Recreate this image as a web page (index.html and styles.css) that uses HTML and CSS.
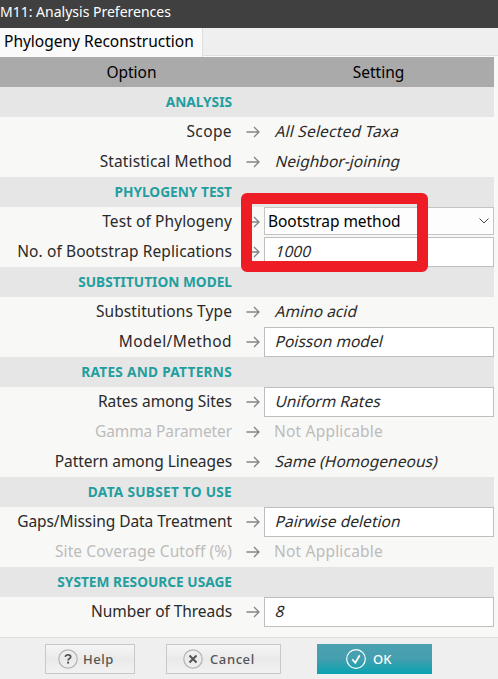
FILE: index.html
```html
<!DOCTYPE html>
<html lang="en">
<head>
<meta charset="utf-8">
<title>M11: Analysis Preferences</title>
<link rel="stylesheet" href="styles.css">
</head>
<body>
<svg width="0" height="0" class="defs"><defs><symbol id="arrow" viewBox="0 0 14 12"><path d="M0.5 6H13M8 1L13 6L8 11" fill="none" stroke="#858585" stroke-width="1.3"/></symbol></defs></svg>
<div class="window">
  <header class="titlebar"><span>M11: Analysis Preferences</span></header>
  <nav class="tabs"><div class="tab"><span>Phylogeny Reconstruction</span></div></nav>
  <main class="panel">
    <div class="grid">
      <div class="row head"><div class="col-option"><span>Option</span></div><div class="col-setting"><span>Setting</span></div></div>
      <div class="row section"><span>ANALYSIS</span></div>
      <div class="row"><span class="label wide">Scope</span><svg class="arrow"><use href="#arrow"/></svg><div class="value airy"><span>All Selected Taxa</span></div></div>
      <div class="row"><span class="label loose">Statistical Method</span><svg class="arrow"><use href="#arrow"/></svg><div class="value"><span>Neighbor-joining</span></div></div>
      <div class="row section"><span>PHYLOGENY TEST</span></div>
      <div class="row"><span class="label loose">Test of Phylogeny</span><svg class="arrow"><use href="#arrow"/></svg><div class="value select"><span>Bootstrap method</span><svg class="chevron" viewBox="0 0 10 6"><path d="M0.5 0.5L5 5L9.5 0.5" fill="none" stroke="#444" stroke-width="1"/></svg></div></div>
      <div class="row"><span class="label loose">No. of Bootstrap Replications</span><svg class="arrow"><use href="#arrow"/></svg><div class="value field"><span>1000</span></div><div class="highlight"></div></div>
      <div class="row section"><span>SUBSTITUTION MODEL</span></div>
      <div class="row"><span class="label loose">Substitutions Type</span><svg class="arrow"><use href="#arrow"/></svg><div class="value"><span>Amino acid</span></div></div>
      <div class="row"><span class="label wide">Model/Method</span><svg class="arrow"><use href="#arrow"/></svg><div class="value field"><span>Poisson model</span></div></div>
      <div class="row section spaced"><span>RATES AND PATTERNS</span></div>
      <div class="row"><span class="label">Rates among Sites</span><svg class="arrow"><use href="#arrow"/></svg><div class="value field"><span>Uniform Rates</span></div></div>
      <div class="row disabled"><span class="label tight">Gamma Parameter</span><svg class="arrow"><use href="#arrow"/></svg><div class="value"><span>Not Applicable</span></div></div>
      <div class="row"><span class="label snug">Pattern among Lineages</span><svg class="arrow"><use href="#arrow"/></svg><div class="value"><span>Same (Homogeneous)</span></div></div>
      <div class="row section spaced"><span>DATA SUBSET TO USE</span></div>
      <div class="row"><span class="label snug">Gaps/Missing Data Treatment</span><svg class="arrow"><use href="#arrow"/></svg><div class="value field"><span>Pairwise deletion</span></div></div>
      <div class="row disabled"><span class="label loose">Site Coverage Cutoff (%)</span><svg class="arrow"><use href="#arrow"/></svg><div class="value"><span>Not Applicable</span></div></div>
      <div class="row section"><span>SYSTEM RESOURCE USAGE</span></div>
      <div class="row"><span class="label snug">Number of Threads</span><svg class="arrow"><use href="#arrow"/></svg><div class="value field"><span>8</span></div></div>
    </div>
  </main>
  <footer class="footer">
    <button class="btn help"><svg viewBox="0 0 20 20"><circle cx="10" cy="10" r="9.2" fill="none" stroke="#b4b4b4" stroke-width="1.2"/><path d="M7.3 7.8C7.6 6.3 8.8 5.9 10 5.9C11.6 5.9 12.7 6.6 12.7 7.9C12.7 9.5 10.1 9.5 10.1 11.5" fill="none" stroke="#555" stroke-width="1.7"/><circle cx="10.1" cy="13.7" r="1.1" fill="#555"/></svg><span>Help</span></button>
    <button class="btn cancel"><svg viewBox="0 0 20 20"><circle cx="10" cy="10" r="9.2" fill="none" stroke="#b4b4b4" stroke-width="1.2"/><path d="M6.5 6.5L13.5 13.5M13.5 6.5L6.5 13.5" fill="none" stroke="#555" stroke-width="2"/></svg><span>Cancel</span></button>
    <button class="btn ok"><svg viewBox="0 0 20 20"><circle cx="10" cy="10" r="9.3" fill="none" stroke="#fff" stroke-width="1.2"/><path d="M6.3 10.3L9.3 13.8L13.7 6.2" fill="none" stroke="#fff" stroke-width="1.7"/></svg><span>OK</span></button>
  </footer>
</div>
</body>
</html>
```
FILE: styles.css
```css
* { box-sizing: border-box; }
body { margin: 0; font-family: "Noto Sans", "Open Sans", sans-serif; font-size: 15.5px; color: #2a2a2a; overflow: hidden; }
.defs { display: block; }
.window { width: 498px; height: 679px; display: flex; flex-direction: column; background: #f0f0f0; }
.titlebar { height: 28px; line-height: 24px; background: #404040; color: #fff; font-size: 14px; white-space: nowrap; }
.tabs { height: 29px; display: flex; background: linear-gradient(#efefef 27px, #e0e0e0 27px, #e0e0e0 28px, #fafafa 28px); }
.tab { width: 203px; height: 29px; padding-left: 4px; line-height: 27px; background: #fafafa; border-right: 1px solid #dedede; color: #000; white-space: nowrap; }
.panel { height: 580px; background: #f8f8f6; }
.grid { width: 494px; }
.row { height: 30px; display: flex; align-items: center; position: relative; background: #f8f8f6; line-height: 28px; white-space: nowrap; }
.row.head { background: #aaa; color: #000; }
.label { padding-bottom: 2px; }
.head div { padding-bottom: 1px; }
.col-option { width: 263px; text-align: center; }
.col-setting { flex: 1; text-align: center; }
.row.section { background: #e6e6e6; color: #239e9e; font-size: 13.7px; font-weight: 700; }
.section span { width: 232px; text-align: right; }
.spaced { letter-spacing: 0.26px; }
.label { width: 232px; text-align: right; }
.loose { letter-spacing: 0.1px; }
.wide { letter-spacing: 0.4px; }
.tight { letter-spacing: -0.1px; }
.snug { letter-spacing: -0.06px; }
.arrow { width: 14px; height: 12px; margin: 0 4px 0 14px; flex: none; }
.value { flex: 1; height: 30px; line-height: 26px; padding-left: 11px; border: 1px solid transparent; }
.value span { display: inline-block; transform: skewX(-14deg); letter-spacing: 0.04px; }
.airy span { letter-spacing: 0.2px; }
.field { background: #fff; border-color: #bebebe; }
.select { height: 28px; line-height: 24px; margin-bottom: 2px; padding: 0 4px 0 3px; color: #000; background: #fdfdfd; border-color: #c4c4c4; display: flex; align-items: center; justify-content: space-between; }
.select span { transform: none; letter-spacing: -0.04px; padding-bottom: 1px; }
.disabled .value span { transform: none; letter-spacing: 0.2px; }
.chevron { width: 10px; height: 6px; }
.disabled { color: #bcbcbc; }
.disabled .value { padding-left: 9px; }
.highlight { position: absolute; left: 241px; top: -44px; width: 187px; height: 79px; border: 11px solid #ee1c25; border-radius: 6px; z-index: 1; }
.footer { height: 42px; display: flex; padding: 6px 0 0 45px; background: #efefef; border-top: 1px solid #dedede; }
.btn { height: 30px; display: flex; align-items: center; padding: 0; font-family: "Noto Sans", sans-serif; font-size: 13px; font-weight: 500; color: #555; border: 1px solid #c8c8c8; background: linear-gradient(#f5f5f5, #eaeaea 50%, #f2f2f2); }
.btn svg { width: 20px; height: 20px; flex: none; }
.help { width: 90px; padding-left: 12px; gap: 5px; letter-spacing: 0.5px; }
.cancel { width: 115px; margin-left: 31px; padding-left: 16px; gap: 7px; letter-spacing: 0.6px; }
.ok { width: 115px; margin-left: 36px; padding-left: 29px; gap: 7px; color: #fff; border: 0; background: linear-gradient(#4ba1b1, #449fae 50%, #06a3b3); }
```
